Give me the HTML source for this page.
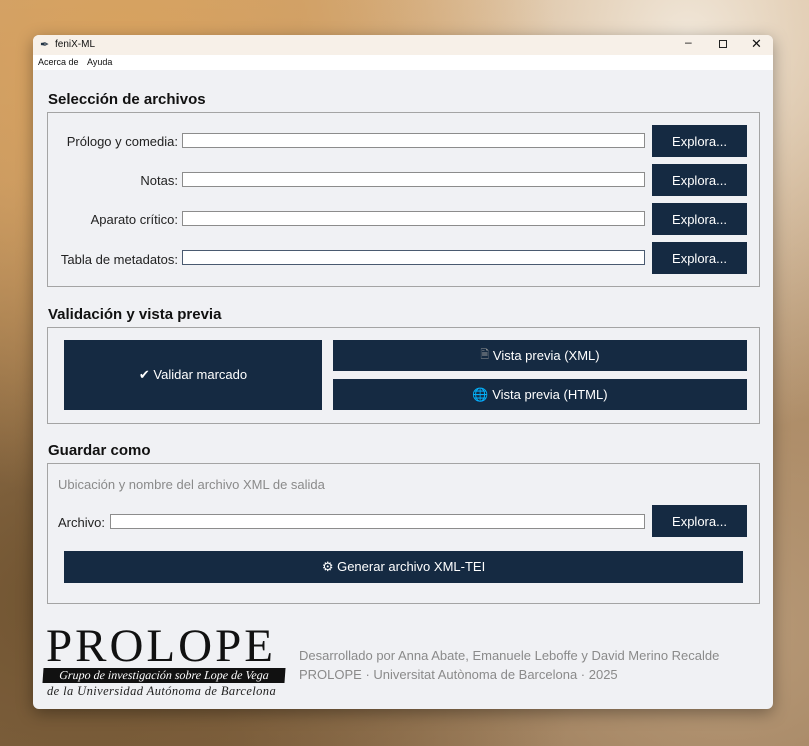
<!DOCTYPE html>
<html><head><meta charset="utf-8"><style>
*{box-sizing:border-box;margin:0;padding:0}
body{width:809px;height:746px;overflow:hidden;position:relative;font-family:"Liberation Sans","DejaVu Sans",sans-serif;
background:radial-gradient(ellipse at 15% 10%,#d9a25e 0%,transparent 45%),radial-gradient(ellipse at 85% 5%,#f0e6d8 0%,transparent 40%),radial-gradient(ellipse at 10% 80%,#6f5330 0%,transparent 50%),radial-gradient(ellipse at 90% 85%,#b89a78 0%,transparent 50%),linear-gradient(#c9a070,#8a6a48);}
.win{position:absolute;left:33px;top:35px;width:740px;height:674px;background:#f0f1f4;border-radius:6px;overflow:hidden;box-shadow:0 4px 16px rgba(0,0,0,.35)}
.title{position:absolute;left:0;top:0;width:740px;height:20px;background:#f7f0e8;font-size:10px;color:#111}
.menu{position:absolute;left:0;top:20px;width:740px;height:15px;background:#fff;font-size:9px;color:#111}
.a{position:absolute}
h2{position:absolute;font-size:15px;font-weight:bold;color:#111}
.frame{position:absolute;border:1px solid #a4a4a4;background:#f0f1f4}
.lbl{position:absolute;font-size:13px;color:#222;text-align:right}
.inp{position:absolute;height:15px;background:#fff;border:1px solid #8c8c8c}
.btn{position:absolute;background:#152a42;color:#fff;font-size:13px;display:flex;align-items:center;justify-content:center}
.grey{position:absolute;font-size:13px;color:#8a8a8a}
</style></head><body>
<div class="win">
<div class="title"><span class="a" style="left:7px;top:3px;font-size:11px;color:#234">&#10002;</span><span class="a" style="left:22px;top:4px">feniX-ML</span>
<span class="a" style="left:652px;top:0;font-size:12px">&#8211;</span><span class="a" style="left:686px;top:5px;width:8px;height:8px;border:1px solid #222"></span><span class="a" style="left:718px;top:1px;font-size:13px">&#10005;</span></div>
<div class="menu"><span class="a" style="left:5px;top:2px">Acerca de</span><span class="a" style="left:54px;top:2px">Ayuda</span></div>

<h2 style="left:15px;top:56px">Selección de archivos</h2>
<div class="frame" style="left:14px;top:77px;width:713px;height:175px"></div>
<div class="lbl" style="left:0;width:145px;top:99px">Prólogo y comedia:</div>
<div class="inp" style="left:149px;top:98px;width:463px"></div>
<div class="btn" style="left:619px;top:90px;width:95px;height:32px">Explora...</div>
<div class="lbl" style="left:0;width:145px;top:138px">Notas:</div>
<div class="inp" style="left:149px;top:137px;width:463px"></div>
<div class="btn" style="left:619px;top:129px;width:95px;height:32px">Explora...</div>
<div class="lbl" style="left:0;width:145px;top:177px">Aparato crítico:</div>
<div class="inp" style="left:149px;top:176px;width:463px"></div>
<div class="btn" style="left:619px;top:168px;width:95px;height:32px">Explora...</div>
<div class="lbl" style="left:0;width:145px;top:217px">Tabla de metadatos:</div>
<div class="inp" style="left:149px;top:215px;width:463px;border-color:#4a5a70"></div>
<div class="btn" style="left:619px;top:207px;width:95px;height:32px">Explora...</div>

<h2 style="left:15px;top:271px">Validación y vista previa</h2>
<div class="frame" style="left:14px;top:292px;width:713px;height:97px"></div>
<div class="btn" style="left:31px;top:305px;width:258px;height:70px">&#10004;&nbsp;Validar marcado</div>
<div class="btn" style="left:300px;top:305px;width:414px;height:31px"><span style="color:#999;font-size:11px">&#128462;</span>&nbsp;Vista previa (XML)</div>
<div class="btn" style="left:300px;top:344px;width:414px;height:31px">&#127760;&nbsp;Vista previa (HTML)</div>

<h2 style="left:15px;top:407px">Guardar como</h2>
<div class="frame" style="left:14px;top:428px;width:713px;height:141px"></div>
<div class="grey" style="left:25px;top:442px">Ubicación y nombre del archivo XML de salida</div>
<div class="lbl" style="left:25px;top:480px">Archivo:</div>
<div class="inp" style="left:77px;top:479px;width:535px"></div>
<div class="btn" style="left:619px;top:470px;width:95px;height:32px">Explora...</div>
<div class="btn" style="left:31px;top:516px;width:679px;height:32px">&#9881;&nbsp;Generar archivo XML-TEI</div>

<div class="a" style="left:13px;top:586px;font-family:'Liberation Serif',serif;font-size:47px;letter-spacing:3px;color:#111;line-height:50px">PROLOPE</div>
<div class="a" style="left:10px;top:633px;width:242px;height:15px;background:#111;color:#fff;font-family:'Liberation Serif',serif;font-style:italic;font-size:12px;line-height:15px;text-align:center;transform:skewX(-4deg)">Grupo de investigación sobre Lope de Vega</div>
<div class="a" style="left:14px;top:649px;font-family:'Liberation Serif',serif;font-style:italic;font-size:12.5px;color:#222;letter-spacing:.4px">de la Universidad Autónoma de Barcelona</div>
<div class="grey" style="left:266px;top:613px">Desarrollado por Anna Abate, Emanuele Leboffe y David Merino Recalde</div>
<div class="grey" style="left:266px;top:632px">PROLOPE · Universitat Autònoma de Barcelona · 2025</div>
</div>
</body></html>
